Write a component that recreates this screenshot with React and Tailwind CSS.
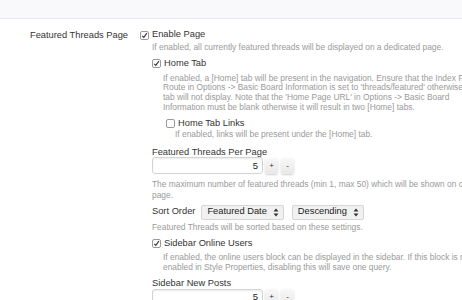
import React from "react";

function Check({ checked }) {
  return (
    <span className="inline-flex h-[9px] w-[9px] shrink-0 items-center justify-center rounded-[2px] border border-[#9a9a9a] bg-white">
      {checked && (
        <svg width="7" height="7" viewBox="0 0 7 7">
          <path d="M1.2 3.8 L2.8 5.4 L5.9 1.2" fill="none" stroke="#333" strokeWidth="1.1" />
        </svg>
      )}
    </span>
  );
}

function Desc({ lines, className = "" }) {
  return (
    <div className={`text-[8.4px] leading-[9.7px] text-[#9a9a9a] ${className}`}>
      {lines.map((l) => (
        <div key={l} className="whitespace-nowrap">
          {l}
        </div>
      ))}
    </div>
  );
}

function Spinner({ className = "" }) {
  return (
    <div className={`flex items-center gap-[2px] ${className}`}>
      <div className="flex h-[17px] w-[111px] items-center justify-end rounded-[3px] border border-[#d4d4d4] bg-white pr-[4px] text-[9.5px] text-[#222] shadow-[inset_0_1px_2px_rgba(0,0,0,0.08)]">
        5
      </div>
      <button className="flex h-[16px] w-[13px] items-center justify-center rounded-[3px] bg-gradient-to-b from-[#f8f8f8] to-[#e8e8e8] text-[8px] text-[#333] shadow-[0_1px_2px_rgba(0,0,0,0.18)]">
        +
      </button>
      <button className="ml-[1px] flex h-[16px] w-[13px] items-center justify-center rounded-[3px] bg-gradient-to-b from-[#f8f8f8] to-[#e8e8e8] text-[8px] text-[#333] shadow-[0_1px_2px_rgba(0,0,0,0.18)]">
        -
      </button>
    </div>
  );
}

function Arrows() {
  return (
    <svg width="6" height="9" viewBox="0 0 6 9">
      <path d="M3 0.5 L5.5 3.5 L0.5 3.5 Z" fill="#333" />
      <path d="M3 8.5 L5.5 5.5 L0.5 5.5 Z" fill="#333" />
    </svg>
  );
}

function Select({ label, className = "" }) {
  return (
    <div
      className={`flex h-[15px] items-center gap-[6px] whitespace-nowrap rounded-[2px] border border-[#d6d6d6] bg-[#f1f1f1] pl-[5px] pr-[4px] text-[9.3px] text-[#222] ${className}`}
    >
      <span>{label}</span>
      <Arrows />
    </div>
  );
}

export default function App() {
  return (
    <div
      className="h-[300px] w-full overflow-hidden bg-white text-[#333]"
      style={{ fontFamily: '"Liberation Sans", Arial, sans-serif' }}
    >
      <div className="h-[19px] border-b border-[#e8eaef] bg-[#f9f9fc]" />
      <div className="flex pt-[10px]">
        <div className="w-[128px] shrink-0 text-right text-[9.3px] leading-[12px]">
          Featured Threads Page
        </div>
        <div className="ml-[12px] flex-1">
          <label className="flex h-[12px] items-center gap-[3px] text-[9.3px]">
            <Check checked />
            <span>Enable Page</span>
          </label>
          <Desc
            className="ml-[12px] mt-[2px]"
            lines={["If enabled, all currently featured threads will be displayed on a dedicated page."]}
          />

          <div className="ml-[12px]">
            <label className="mt-[5px] flex h-[12px] items-center gap-[3px] text-[9.3px]">
              <Check checked />
              <span>Home Tab</span>
            </label>
            <Desc
              className="ml-[11px] mt-[4px]"
              lines={[
                "If enabled, a [Home] tab will be present in the navigation. Ensure that the Index Page",
                "Route in Options -> Basic Board Information is set to 'threads/featured' otherwise the",
                "tab will not display. Note that the 'Home Page URL' in Options -> Basic Board",
                "Information must be blank otherwise it will result in two [Home] tabs.",
              ]}
            />
            <div className="ml-[14px]">
              <label className="mt-[5px] flex h-[12px] items-center gap-[3px] text-[9.3px]">
                <Check />
                <span>Home Tab Links</span>
              </label>
              <Desc
                className="ml-[9px]"
                lines={["If enabled, links will be present under the [Home] tab."]}
              />
            </div>

            <div className="mt-[8px] text-[9.3px] leading-[10px]">Featured Threads Per Page</div>
            <Spinner />
            <Desc
              className="mt-[5px] leading-[10.5px]"
              lines={[
                "The maximum number of featured threads (min 1, max 50) which will be shown on one",
                "page.",
              ]}
            />

            <div className="mt-[4px] flex h-[16px] items-center text-[9.3px]">
              <span className="mr-[6px]">Sort Order</span>
              <Select label="Featured Date" />
              <Select label="Descending" className="ml-[8px]" />
            </div>
            <Desc
              className="mt-[3px]"
              lines={["Featured Threads will be sorted based on these settings."]}
            />

            <label className="mt-[5px] flex h-[12px] items-center gap-[3px] text-[9.3px]">
              <Check checked />
              <span>Sidebar Online Users</span>
            </label>
            <Desc
              className="ml-[11px] mt-[2px] leading-[10.5px]"
              lines={[
                "If enabled, the online users block can be displayed in the sidebar. If this block is not",
                "enabled in Style Properties, disabling this will save one query.",
              ]}
            />

            <div className="mt-[4px] text-[9.3px] leading-[12px]">Sidebar New Posts</div>
            <Spinner />
          </div>
        </div>
      </div>
    </div>
  );
}
